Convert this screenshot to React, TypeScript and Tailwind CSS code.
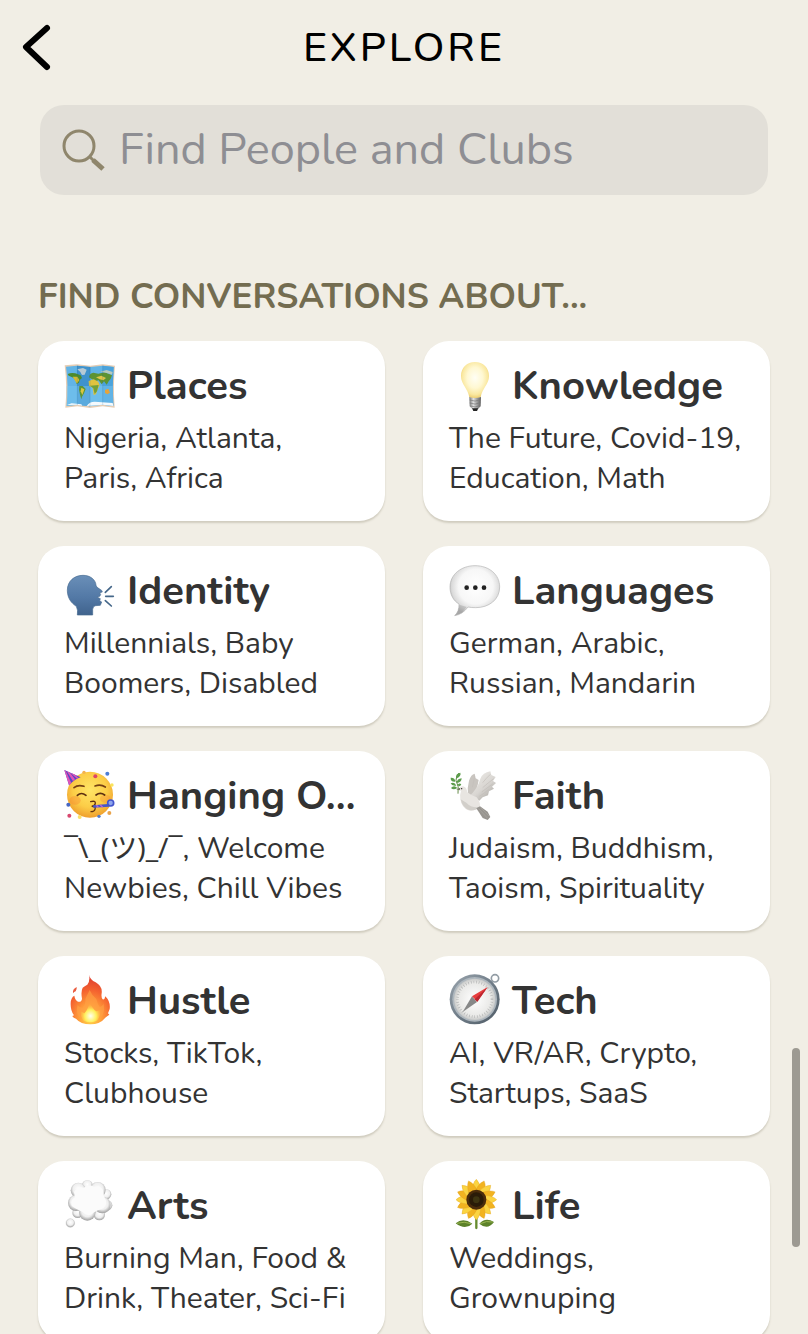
import React from 'react';

const MapIcon = () => (
  <svg viewBox="42 30 156 156" className="size-[52px] shrink-0 overflow-visible" aria-hidden="true">
    <path d="M44 46 L81 43 L121 47 L158 43 L195 47 Q189 108 194 173 L158 169 L120 174 L82 169 L46 173 Q52 108 44 46Z" fill="#e6cdb4" />
    <path d="M48 50 L81 47 L121 51 L158 47 L191 51 Q186 108 190 168 L158 164 L120 169 L82 164 L50 168 Q56 108 48 50Z" fill="#62b4e6" />
    <path d="M81 47 L121 51 L120 169 L82 164Z" fill="#3f92cc" />
    <path d="M158 47 L191 51 Q186 108 190 168 L158 164Z" fill="#4ba3db" />
    <path d="M50 108 H188 L190 168 L158 164 L120 169 L82 164 L50 168Z" fill="#7cc8f2" opacity=".45" />
    <path d="M53 72 Q64 67 76 70 L92 76 L96 84 L89 90 L87 98 L80 102 L77 92 L70 83 L56 77Z" fill="#4d8a2c" />
    <path d="M68 80 L82 80 L88 90 L81 101 L75 92Z" fill="#d3ba32" />
    <path d="M82 58 L99 54 L110 59 L104 74 L96 75 L91 66Z" fill="#b7cad4" />
    <path d="M88 108 L98 108 L107 117 L102 130 L96 140 L94 148 L90 134 L87 119Z" fill="#5d9535" />
    <path d="M94 113 L103 118 L97 135 L92 124Z" fill="#dcc63f" />
    <path d="M117 82 Q119 69 130 68 L145 71 L164 67 L186 76 L182 86 L176 94 L170 104 L162 94 L155 103 L146 91 L137 93 L126 88Z" fill="#5d9332" />
    <path d="M116 93 L131 88 L145 95 L149 106 L143 118 L138 133 L131 135 L128 113 L117 107Z" fill="#e0c340" />
    <path d="M120 107 L146 105 L141 124 L134 132 L130 115Z" fill="#71a03a" />
    <path d="M138 82 L154 77 L168 84 L160 91 L149 88Z" fill="#dfc548" />
    <path d="M165 120 L175 116 L180 128 L172 133 L165 129Z" fill="#e4a43c" />
    <path d="M51 165 L65 160 L94 163 L97 167 L82 164Z M110 168 Q118 155 134 155 L188 159 L190 168 L158 164Z" fill="#f5fafd" />
    <path d="M151 65 L170 60 L188 66 L186 74 L170 69Z" fill="#b6c9bd" />
    <path d="M82 47 V164 M120 51 V168 M158 47 V164" stroke="#245f8c" strokeWidth="2" opacity=".25" />
  </svg>
);

const BulbIcon = () => (
  <svg viewBox="42 30 156 156" className="size-[52px] shrink-0 overflow-visible" aria-hidden="true">
    <defs>
      <radialGradient id="bulb" cx=".5" cy=".43" r=".56">
        <stop offset="0" stopColor="#fffef5" />
        <stop offset=".5" stopColor="#fff8d2" />
        <stop offset=".82" stopColor="#fae8a0" />
        <stop offset="1" stopColor="#edce70" />
      </radialGradient>
      <linearGradient id="bulbBase">
        <stop offset="0" stopColor="#797979" />
        <stop offset=".35" stopColor="#e0e0e0" />
        <stop offset=".65" stopColor="#a0a0a0" />
        <stop offset="1" stopColor="#606060" />
      </linearGradient>
    </defs>
    <path d="M120 36 C95 36 78 54 78 78 C78 103 98 114 103 142 Q120 150 137 142 C142 114 162 103 162 78 C162 54 145 36 120 36Z" fill="url(#bulb)" />
    <path d="M103 141 Q120 147 138 141 L137 169 L129 177 L112 177 L104 169Z" fill="url(#bulbBase)" />
    <path d="M104 150 Q120 157 137 149 M104 159 Q120 166 137 158 M106 168 Q120 174 135 167" fill="none" stroke="#777" strokeWidth="2" />
    <path d="M111 175 H130 L126 183 H115Z" fill="#242424" />
  </svg>
);

const SpeakingIcon = () => (
  <svg viewBox="42 15 156 156" className="size-[52px] shrink-0 overflow-visible" aria-hidden="true">
    <defs>
      <linearGradient id="head" x2="0" y2="1">
        <stop offset="0" stopColor="#6a8fb8" />
        <stop offset=".55" stopColor="#5379a6" />
        <stop offset="1" stopColor="#40638d" />
      </linearGradient>
    </defs>
    <path d="M82 165 Q85 151 79 139 C65 130 52 115 52 91 C52 63 73 46 99 46 C122 46 137 60 138 76 Q139 83 149 87 Q157 91 157 96 L149 98 L152 104 L149 109 L142 112 L151 116 L149 122 L155 126 L151 136 L137 137 Q129 138 128 148 L128 165Z" fill="url(#head)" stroke="#46698f" strokeWidth="2" />
    <path d="M166 97 L184 80 M167 109 H190 M166 122 L184 138" stroke="#456789" strokeWidth="5" strokeLinecap="round" />
  </svg>
);

const SpeechIcon = () => (
  <svg viewBox="42 15 156 156" className="size-[52px] shrink-0 overflow-visible" aria-hidden="true">
    <defs>
      <radialGradient id="speech" cx=".52" cy=".42" r=".58">
        <stop offset="0" stopColor="#ffffff" />
        <stop offset=".6" stopColor="#f7f7f7" />
        <stop offset=".84" stopColor="#dadada" />
        <stop offset="1" stopColor="#a4a4a4" />
      </radialGradient>
    </defs>
    <path d="M120 17 C163 17 194 44 194 81 C194 119 162 143 122 143 Q108 143 99 141 Q83 163 59 167 Q73 154 72 132 C55 122 45 104 45 81 C45 44 78 17 120 17Z" fill="url(#speech)" stroke="#b3b3b3" strokeWidth="2" />
    <path d="M73 134 Q73 151 61 165 Q80 161 95 141" fill="#aaa" opacity=".55" />
    <circle cx="95" cy="83" r="7" fill="#222" />
    <circle cx="121" cy="83" r="7" fill="#222" />
    <circle cx="147" cy="83" r="7" fill="#222" />
  </svg>
);

const PartyIcon = () => (
  <svg viewBox="42 30 156 156" className="size-[52px] shrink-0 overflow-visible" aria-hidden="true">
    <defs>
      <radialGradient id="face" cx=".5" cy=".4" r=".62">
        <stop offset="0" stopColor="#ffe566" />
        <stop offset=".6" stopColor="#fccd47" />
        <stop offset="1" stopColor="#ee9b2b" />
      </radialGradient>
    </defs>
    <circle cx="120" cy="104" r="69" fill="url(#face)" />
    <ellipse cx="75" cy="121" rx="17" ry="13" fill="#f58032" opacity=".35" />
    <ellipse cx="166" cy="116" rx="16" ry="12" fill="#f58032" opacity=".3" />
    <path d="M43 30 L92 52 Q75 56 57 76Z" fill="#5746c5" />
    <path d="M47 32 L64 69 L57 75 L43 30Z M60 38 L75 58 L69 64 L50 33Z M73 43 L86 54 L81 56 L62 39Z" fill="#df55b8" />
    <path d="M72 83 Q84 73 102 79 M135 78 Q152 72 166 81" fill="none" stroke="#764013" strokeWidth="5" strokeLinecap="round" />
    <path d="M82 106 Q94 95 108 106 M138 105 Q151 95 164 105" fill="none" stroke="#5e3010" strokeWidth="5" strokeLinecap="round" />
    <path d="M122 125 Q137 121 136 130 Q135 137 125 139 Q139 139 135 148 Q133 155 123 155" fill="none" stroke="#623011" strokeWidth="4" strokeLinecap="round" />
    <path d="M129 136 L174 132 L178 140 L130 143Z" fill="#4758c9" />
    <path d="M139 136 L145 142 M151 135 L158 142" stroke="#bd62d6" strokeWidth="4" />
    <circle cx="182" cy="129" r="9" fill="#8ea5ed" stroke="#4455cc" strokeWidth="5" />
    <circle cx="172" cy="41" r="6" fill="#4c7ed6" />
    <circle cx="136" cy="49" r="6" fill="#dd4568" />
    <circle cx="102" cy="37" r="5" fill="#f4b24d" />
    <circle cx="186" cy="75" r="5" fill="#fae45a" />
    <circle cx="55" cy="134" r="6" fill="#4767c4" />
    <circle cx="58" cy="167" r="6" fill="#d84870" />
    <circle cx="89" cy="171" r="6" fill="#fae06a" />
    <circle cx="147" cy="169" r="5" fill="#547bc6" />
    <circle cx="178" cy="159" r="6" fill="#e9a44c" />
  </svg>
);

const DoveIcon = () => (
  <svg viewBox="42 30 156 156" className="size-[52px] shrink-0 overflow-visible" aria-hidden="true">
    <defs>
      <linearGradient id="dove" x2=".8" y2="1">
        <stop offset="0" stopColor="#f1efeb" />
        <stop offset=".6" stopColor="#d9d6d2" />
        <stop offset="1" stopColor="#aaa7a2" />
      </linearGradient>
    </defs>
    <path d="M99 104 Q96 84 102 62 Q108 43 119 41 L122 55 L131 60 Q126 92 113 109Z" fill="#c9c5c0" />
    <path d="M103 108 Q127 88 136 56 Q143 38 166 34 L169 45 L182 51 L174 63 L183 69 L171 80 L177 86 L162 94 L159 106 L143 112 L133 122Z" fill="url(#dove)" />
    <path d="M143 68 Q154 54 166 43 M143 83 Q159 69 176 56 M140 96 Q156 84 173 72 M133 109 Q147 101 160 89 M112 82 Q116 64 119 49" fill="none" stroke="#c2beb9" strokeWidth="2" />
    <path d="M73 88 Q75 79 84 79 Q95 81 97 97 Q109 107 125 112 Q136 125 135 140 Q122 154 100 151 Q80 143 76 118 Q74 104 78 94Z" fill="#e8e5e1" />
    <path d="M77 118 Q82 144 104 151 Q122 153 133 141 Q110 145 94 128Z" fill="#c9c6c1" opacity=".7" />
    <path d="M124 145 L135 139 L158 155 L166 171 L158 180 L143 174Z" fill="#989590" />
    <path d="M131 146 L157 174 M137 143 L163 169" stroke="#aaa7a2" strokeWidth="2" />
    <path d="M64 88 L76 83 L74 91Z" fill="#70685d" />
    <circle cx="80" cy="86" r="2" fill="#27231f" />
    <path d="M69 101 Q73 79 63 61 Q63 48 72 39" fill="none" stroke="#658b49" strokeWidth="3" />
    <path d="M63 56 Q61 40 76 38 Q80 48 63 56Z M61 65 Q46 66 47 53 Q60 52 61 65Z M65 69 Q66 56 80 55 Q80 67 65 69Z M64 77 Q50 79 47 70 Q59 64 64 77Z M67 84 Q55 92 48 84 Q57 74 67 84Z M67 76 Q72 67 79 73 Q76 82 67 76Z" fill="#5d9c4c" />
  </svg>
);

const FireIcon = () => (
  <svg viewBox="42 30 156 156" className="size-[52px] shrink-0 overflow-visible" aria-hidden="true">
    <defs>
      <radialGradient id="fire" cx=".5" cy=".88" r=".82">
        <stop offset="0" stopColor="#ffdc4c" />
        <stop offset=".35" stopColor="#ff9d39" />
        <stop offset=".7" stopColor="#f4622f" />
        <stop offset="1" stopColor="#df4030" />
      </radialGradient>
      <radialGradient id="fireCore" cx=".5" cy=".7" r=".6">
        <stop offset="0" stopColor="#fffff0" />
        <stop offset=".5" stopColor="#fff05b" />
        <stop offset="1" stopColor="#ffad3b" stopOpacity="0" />
      </radialGradient>
    </defs>
    <path d="M117 29 Q120 44 137 52 Q158 64 155 85 Q153 98 158 103 Q164 105 166 94 Q182 110 179 132 L174 145 L178 149 Q171 154 166 158 Q150 178 121 178 Q92 178 78 161 Q70 159 67 153 L72 151 Q61 137 62 114 Q63 97 73 92 Q75 105 84 110 Q95 112 96 101 Q92 80 98 68 Q106 62 112 59 Q121 47 117 29Z" fill="url(#fire)" />
    <path d="M69 85 Q67 72 80 66 Q81 74 77 79 Q72 80 69 85Z" fill="#e95c40" />
    <path d="M119 75 Q126 92 139 102 Q143 117 149 126 Q158 125 160 115 Q167 144 151 158 Q122 174 91 159 Q75 143 83 120 Q88 129 98 128 Q108 118 106 102 Q112 89 119 75Z" fill="#ffa043" opacity=".65" />
    <path d="M119 109 Q125 130 139 139 L151 135 Q152 158 139 168 Q121 176 102 168 Q90 157 93 139 L103 145 Q115 133 119 109Z" fill="url(#fireCore)" />
  </svg>
);

const CompassIcon = () => (
  <svg viewBox="42 30 156 156" className="size-[52px] shrink-0 overflow-visible" aria-hidden="true">
    <defs>
      <linearGradient id="rim" x2="1" y2="1">
        <stop offset="0" stopColor="#9ba5ae" />
        <stop offset=".5" stopColor="#707d88" />
        <stop offset="1" stopColor="#4e5a65" />
      </linearGradient>
      <radialGradient id="dial">
        <stop offset="0" stopColor="#ffffff" />
        <stop offset=".8" stopColor="#e9e9e7" />
        <stop offset="1" stopColor="#c8c9c8" />
      </radialGradient>
    </defs>
    <circle cx="180" cy="40" r="11" fill="none" stroke="#929ca4" strokeWidth="5" />
    <circle cx="119" cy="103" r="75" fill="url(#rim)" />
    <circle cx="119" cy="103" r="67" fill="#aeb7be" />
    <circle cx="119" cy="103" r="62" fill="url(#dial)" />
    <circle cx="119" cy="103" r="52" fill="none" stroke="#b4b5b5" strokeWidth="8" strokeDasharray="2 6" />
    <path d="M111 94 L126 111 L83 141Z" fill="#878888" />
    <path d="M158 66 L127 110 L111 94Z" fill="#e73d3d" />
    <path d="M158 66 L119 103 L127 110Z" fill="#bd2630" />
  </svg>
);

const ThoughtIcon = () => (
  <svg viewBox="42 30 156 156" className="size-[52px] shrink-0 overflow-visible" aria-hidden="true">
    <defs>
      <radialGradient id="puff" cx=".5" cy=".42" r=".58">
        <stop offset="0" stopColor="#ffffff" />
        <stop offset=".6" stopColor="#efefef" />
        <stop offset="1" stopColor="#9c9c9c" />
      </radialGradient>
    </defs>
    <g fill="url(#puff)">
      <circle cx="112" cy="46" r="16" />
      <circle cx="168" cy="73" r="16" />
      <circle cx="171" cy="106" r="16" />
      <circle cx="83" cy="128" r="16" />
      <circle cx="148" cy="134" r="17" />
      <circle cx="85" cy="61" r="23" />
      <circle cx="143" cy="60" r="24" />
      <circle cx="78" cy="99" r="24" />
      <circle cx="157" cy="105" r="25" />
      <circle cx="112" cy="127" r="25" />
      <circle cx="61" cy="159" r="13" stroke="#bdbdbd" strokeWidth="1" />
    </g>
    <path d="M72 66 Q83 48 101 53 Q117 42 132 50 Q152 44 160 62 Q160 79 168 93 Q170 112 154 118 Q142 121 130 128 Q115 144 98 126 Q78 118 66 108 Q58 92 75 82Z" fill="#fbfbfb" />
  </svg>
);

const SunflowerIcon = () => (
  <svg viewBox="42 30 156 156" className="size-[52px] shrink-0 overflow-visible" aria-hidden="true">
    <path d="M124 132 V174" stroke="#668c2f" strokeWidth="7" strokeLinecap="round" />
    <path d="M62 160 Q84 141 112 161 Q91 182 62 160Z M133 161 Q151 141 177 156 Q158 182 133 161Z" fill="#5c822a" />
    <path d="M66 160 Q88 153 108 161 M136 161 Q155 151 173 156" fill="none" stroke="#9ab551" strokeWidth="3" />
    {Array.from({ length: 16 }, (_, i) => (
      <path
        key={i}
        d="M111 62 Q113 38 124 28 Q136 39 137 62 L124 89Z"
        fill={i % 2 ? '#f2b320' : '#fbd442'}
        stroke="#dfa022"
        strokeWidth="1"
        transform={`rotate(${i * 22.5} 124 89)`}
      />
    ))}
    <circle cx="124" cy="89" r="30" fill="#4b2c0b" />
    <circle cx="124" cy="89" r="22" fill="#2a1b08" />
    <circle cx="124" cy="89" r="10" fill="#3d3411" />
  </svg>
);

const Shrug = () => (
  <>
    <span className="font-['Noto_Sans','Noto_Sans_CJK_JP',sans-serif] text-[28px] leading-none">¯\_(ツ)_/¯</span>, Welcome
  </>
);

const topics = [
  { title: 'Places', lines: ['Nigeria, Atlanta,', 'Paris, Africa'], Icon: MapIcon },
  { title: 'Knowledge', lines: ['The Future, Covid-19,', 'Education, Math'], Icon: BulbIcon },
  { title: 'Identity', lines: ['Millennials, Baby', 'Boomers, Disabled'], Icon: SpeakingIcon },
  { title: 'Languages', lines: ['German, Arabic,', 'Russian, Mandarin'], Icon: SpeechIcon },
  { title: 'Hanging O…', lines: [<Shrug />, 'Newbies, Chill Vibes'], Icon: PartyIcon },
  { title: 'Faith', lines: ['Judaism, Buddhism,', 'Taoism, Spirituality'], Icon: DoveIcon },
  { title: 'Hustle', lines: ['Stocks, TikTok,', 'Clubhouse'], Icon: FireIcon },
  { title: 'Tech', lines: ['AI, VR/AR, Crypto,', 'Startups, SaaS'], Icon: CompassIcon },
  { title: 'Arts', lines: ['Burning Man, Food &', 'Drink, Theater, Sci-Fi'], Icon: ThoughtIcon },
  { title: 'Life', lines: ['Weddings,', 'Grownuping'], Icon: SunflowerIcon },
];

const App: React.FC = () => {
  return (
    <div className="relative h-screen overflow-hidden bg-[#f1eee5] font-['Nunito','Lato','Noto_Sans_CJK_JP',sans-serif]">
      {/* Header */}
      <header className="grid h-24 grid-cols-[1fr_auto_1fr] items-center px-5">
        <button aria-label="Back" className="justify-self-start">
          <svg viewBox="0 0 32 52" className="h-[52px] w-8" fill="none" stroke="#000" strokeWidth="6" strokeLinecap="round" strokeLinejoin="round">
            <path d="M27 6 L6 25 L27 45" />
          </svg>
        </button>
        <h1 className="text-[41px] leading-12 font-medium tracking-[3px] text-black">EXPLORE</h1>
      </header>

      <main className="px-[38px]">
        {/* Search */}
        <label className="mx-[2px] mt-[9px] flex h-[90px] items-center gap-[11px] rounded-3xl bg-[#e2dfd8] pr-6 pl-5">
          <svg viewBox="0 0 48 48" className="size-12 shrink-0" fill="none" stroke="#8f866c" aria-hidden="true">
            <circle cx="19" cy="20" r="15" strokeWidth="3" />
            <path d="M30 31 L34 35" strokeWidth="3" />
            <path d="M33 34 L43 43" strokeWidth="5" />
          </svg>
          <input
            type="text"
            aria-label="Find People and Clubs"
            placeholder="Find People and Clubs"
            className="min-w-0 flex-1 bg-transparent text-[45px] leading-14 text-[#8e8e93] outline-none placeholder:text-[#8e8e93]"
          />
        </label>

        {/* Topics */}
        <h2 className="mt-[82px] text-[35px] leading-10 font-bold text-[#736c50]">FIND CONVERSATIONS ABOUT...</h2>
        <div className="mt-6 grid grid-cols-2 gap-x-[38px] gap-y-[25px] pb-10">
          {topics.map(({ title, lines, Icon }) => (
            <button
              key={title}
              className="min-w-0 rounded-[26px] bg-white px-[26px] pt-5 pb-[22px] text-left text-[#333] shadow-[0_2px_2px_#d0ccbf]"
            >
              <span className="flex h-[50px] items-center gap-[11px]">
                <Icon />
                <span className="text-[40px] leading-12 font-bold whitespace-nowrap">{title}</span>
              </span>
              <span className="mt-2 block text-[30px] leading-10 whitespace-nowrap">
                {lines.map((line, index) => (
                  <span key={index} className="block h-10">{line}</span>
                ))}
              </span>
            </button>
          ))}
        </div>
      </main>

      {/* Scroll indicator */}
      <div className="absolute right-2 bottom-[87px] h-[199px] w-2 rounded-full bg-[#9d9a92]" />
    </div>
  );
};

export default App;
